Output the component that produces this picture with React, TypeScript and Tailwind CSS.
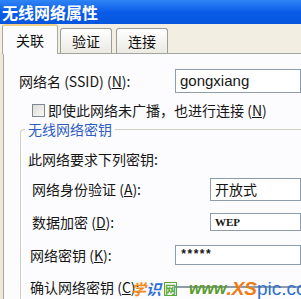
import React from 'react'

const cjk = "font-['SimSun','Noto_Sans_CJK_SC',sans-serif]"

function Tab({ label, active }: { label: string; active?: boolean }) {
  if (active) {
    return (
      <div className="relative z-10 -mb-px flex h-[30px] w-[56px] items-center justify-center rounded-t-[3px] border border-b-0 border-t-2 border-[#a9a9a0] border-t-[#f0cf8c] bg-[#fcfcfe] text-[14px] text-[#111]">
        {label}
      </div>
    )
  }
  return (
    <div className="flex h-[25px] w-[52px] items-center justify-center rounded-t-[3px] border border-b-0 border-[#9a9e9a] bg-gradient-to-b from-[#ffffff] to-[#ebeae3] text-[14px] text-[#111]">
      {label}
    </div>
  )
}

function Box({ children, className }: { children?: React.ReactNode; className?: string }) {
  return (
    <div className={`flex flex-1 items-center border border-[#8d9ca8] bg-white pl-[4px] ${className ?? ''}`}>
      {children}
    </div>
  )
}

export default function App(): JSX.Element {
  return (
    <div className={`relative flex h-[299px] w-[301px] flex-col overflow-hidden bg-[#ece9d8] ${cjk}`}>
      <div className="flex h-[27px] items-center bg-gradient-to-b from-[#2f84f5] via-[#0a5ce8] to-[#0655dd] pl-[2px] text-[16px] font-bold text-white">
        无线网络属性
      </div>
      <div className="h-[1px] bg-[#243c9a]" />
      <div className="h-[2px] bg-[#9c5a6c]" />
      <div className="flex h-[30px] items-end gap-[2px] bg-[#f2efe2] pl-[2px]">
        <Tab label="关联" active />
        <Tab label="验证" />
        <div className="ml-[2px]">
          <Tab label="连接" />
        </div>
      </div>
      <div className="ml-[3px] flex flex-1 flex-col border-l border-t border-[#a3a69d] bg-[#fcfcfe] text-[14px] text-[#161616]">
        <div className="mt-[16px] flex h-[22px] items-center">
          <div className="w-[171px] pl-[15px]">
            网络名 (SSID) (<span className="underline">N</span>):
          </div>
          <Box className="font-['Liberation_Sans',sans-serif] text-[15px]">gongxiang</Box>
        </div>
        <div className="mt-[10px] flex h-[16px] items-center pl-[28px]">
          <div className="mr-[3px] h-[13px] w-[13px] border border-[#7b8a96] bg-gradient-to-br from-[#dcdcd4] to-[#fbfbf8]" />
          即使此网络未广播，也进行连接 (<span className="underline">N</span>)
        </div>
        <fieldset className="ml-[16px] mt-[3px] rounded-tl-[4px] border-l border-t border-[#d0d0bf] pb-[10px]">
          <legend className="ml-[4px] h-[16px] px-[3px] text-[14px] leading-[16px] text-[#2f5cc4]">
            无线网络密钥
          </legend>
          <div className="mt-[14px] flex h-[16px] items-center pl-[7px]">此网络要求下列密钥:</div>
          <div className="mt-[11px] flex h-[22px] items-center">
            <div className="w-[189px] pl-[11px]">
              网络身份验证 (<span className="underline">A</span>):
            </div>
            <Box>开放式</Box>
          </div>
          <div className="mt-[11px] flex h-[22px] items-center">
            <div className="w-[189px] pl-[11px]">
              数据加密 (<span className="underline">D</span>):
            </div>
            <Box className="font-['Liberation_Serif',serif] text-[11px] font-bold">WEP</Box>
          </div>
          <div className="mt-[10px] flex h-[24px] items-center">
            <div className="w-[154px] pl-[9px]">
              网络密钥 (<span className="underline">K</span>):
            </div>
            <Box className="font-['Liberation_Mono',monospace] text-[12px] font-bold tracking-[-1px]">*****</Box>
          </div>
          <div className="mt-[8px] flex h-[24px] items-center">
            <div className="w-[154px] pl-[9px]">
              确认网络密钥 (<span className="underline">C</span>):
            </div>
            <Box />
          </div>
        </fieldset>
      </div>
      <div className="absolute left-[131px] top-[280px] flex items-center italic font-bold leading-[18px]">
        <span className="text-[15px] text-[#f28a1c]">学</span>
        <span className="text-[15px] text-[#2c6fd6]">识</span>
        <span className="ml-[3px] border border-[#5aa83a] text-[11px] leading-[12px] not-italic text-[#5aa83a]">网</span>
        <span className="ml-[12px] font-['Liberation_Sans',sans-serif] text-[16px] text-[#5a9b2c]">www</span>
        <span className="font-['Liberation_Sans',sans-serif] text-[19px] text-[#f07a14]">.XS</span>
        <span className="font-['Liberation_Sans',sans-serif] text-[19px] font-normal not-italic text-[#2f6fd0]">pic.com</span>
      </div>
    </div>
  )
}
